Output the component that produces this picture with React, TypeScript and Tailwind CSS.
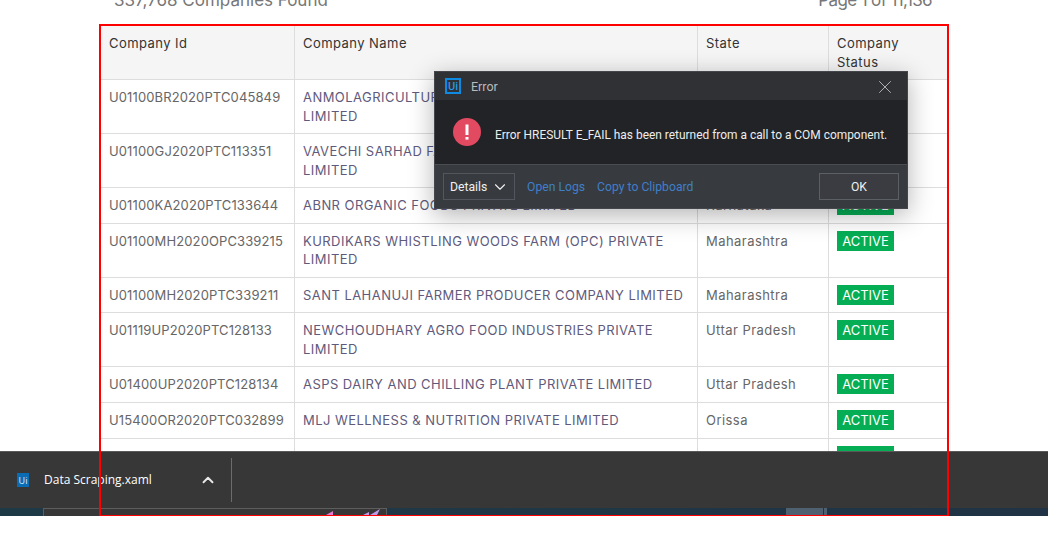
import { ChevronDown, ChevronUp, X } from 'lucide-react';

type Row = { id: string; name: string[]; state: string };

const rows: Row[] = [
  { id: 'U01100BR2020PTC045849', name: ['ANMOLAGRICULTURE PRODUCER COMPANY', 'LIMITED'], state: 'Bihar' },
  { id: 'U01100GJ2020PTC113351', name: ['VAVECHI SARHAD FARMER PRODUCER COMPANY', 'LIMITED'], state: 'Gujarat' },
  { id: 'U01100KA2020PTC133644', name: ['ABNR ORGANIC FOODS PRIVATE LIMITED'], state: 'Karnataka' },
  { id: 'U01100MH2020OPC339215', name: ['KURDIKARS WHISTLING WOODS FARM (OPC) PRIVATE', 'LIMITED'], state: 'Maharashtra' },
  { id: 'U01100MH2020PTC339211', name: ['SANT LAHANUJI FARMER PRODUCER COMPANY LIMITED'], state: 'Maharashtra' },
  { id: 'U01119UP2020PTC128133', name: ['NEWCHOUDHARY AGRO FOOD INDUSTRIES PRIVATE', 'LIMITED'], state: 'Uttar Pradesh' },
  { id: 'U01400UP2020PTC128134', name: ['ASPS DAIRY AND CHILLING PLANT PRIVATE LIMITED'], state: 'Uttar Pradesh' },
  { id: 'U15400OR2020PTC032899', name: ['MLJ WELLNESS & NUTRITION PRIVATE LIMITED'], state: 'Orissa' },
  { id: '', name: [''], state: '' },
];

const cell = 'border border-[#ddd] px-2 pt-2 pb-2 align-top';

function CompanyTable() {
  return (
    <table className="w-[847px] table-fixed border-collapse text-[13px] leading-[18.5px] tracking-[0.45px] text-[#666]">
      <colgroup>
        <col className="w-[194px]" />
        <col className="w-[403px]" />
        <col className="w-[131px]" />
        <col className="w-[119px]" />
      </colgroup>
      <thead>
        <tr className="bg-[#f5f5f5] text-left text-[#333]">
          <th className={`${cell} font-normal`}>Company Id</th>
          <th className={`${cell} font-normal`}>Company Name</th>
          <th className={`${cell} font-normal`}>State</th>
          <th className={`${cell} font-normal`}>
            Company
            <br />
            Status
          </th>
        </tr>
      </thead>
      <tbody>
        {rows.map((r, i) => (
          <tr key={i} className={i === 7 ? 'h-9' : ''}>
            <td className={`${cell} tracking-[0.12px]`}>{r.id}</td>
            <td className={`${cell} text-[#5f5a7c]`}>
              {r.name.map((line, j) => (
                <div key={j} className="whitespace-nowrap">
                  {line}
                </div>
              ))}
            </td>
            <td className={cell}>{r.state}</td>
            <td className={cell}>
              <div className="h-[18.5px]">
                <span className="-mt-px block h-5 w-[57px] bg-[#05ae55] text-center text-[13px] leading-5 tracking-normal text-white">
                  ACTIVE
                </span>
              </div>
            </td>
          </tr>
        ))}
      </tbody>
    </table>
  );
}

function ErrorDialog() {
  return (
    <div className="absolute left-[434px] top-[71px] flex h-[138px] w-[474px] flex-col border border-[#44464b] font-['Roboto',sans-serif] shadow-[0_6px_24px_rgba(0,0,0,0.3)]">
      <div className="flex h-[28px] items-center bg-[#2f3135] pl-[10px] pr-[11px]">
        <span className="flex h-4 w-4 items-center justify-center border-2 border-[#0e8be0] text-[11px] font-medium leading-none text-[#2a97e6]">
          Ui
        </span>
        <span className="ml-[10px] pt-[2px] text-[12.5px] text-[#b9bbbe]">Error</span>
        <X className="ml-auto mt-[2px] h-[22px] w-[22px] text-[#b9bbbe]" strokeWidth={1} />
      </div>
      <div className="flex h-[65px] items-center border-b border-[#4a4c51] bg-[#222326] pl-[18px]">
        <svg width="28" height="28" viewBox="0 0 28 28">
          <circle cx="14" cy="14" r="14" fill="#e24a62" />
          <rect x="12.5" y="6.5" width="3" height="10.5" fill="#fff" />
          <rect x="12.5" y="19" width="3" height="2.6" fill="#fff" />
        </svg>
        <span className="ml-[14px] mt-[7px] whitespace-nowrap text-[11.93px] text-[#eceded]">
          Error HRESULT E_FAIL has been returned from a call to a COM component.
        </span>
      </div>
      <div className="flex flex-1 items-center bg-[#373a3f] pl-2 pr-2 text-[12.2px]">
        <div className="flex h-[27px] w-[72px] items-center justify-between border border-[#53565c] pl-[6px] pr-[5px] text-[#f0f0f0]">
          <span className="pt-[2px]">Details</span>
          <ChevronDown className="h-[18px] w-[18px]" strokeWidth={1.5} />
        </div>
        <span className="ml-3 pt-[2px] text-[#3f7fc9]">Open Logs</span>
        <span className="ml-3 pt-[2px] text-[#3f7fc9]">Copy to Clipboard</span>
        <div className="ml-auto flex h-[27px] w-20 items-center justify-center border border-[#5c5f64] bg-[#3a3c41] pt-[2px] text-[#f0f0f0]">
          OK
        </div>
      </div>
    </div>
  );
}

function DownloadBar() {
  return (
    <div className="absolute inset-x-0 top-[451px] h-[65px]">
      <div className="flex h-[57px] items-center border-t border-[#5a5a5a] bg-[#373737] font-['Open_Sans',sans-serif]">
        <div className="relative ml-[17px] flex h-[14px] w-3 items-center justify-center bg-[#0a6cb5] text-[9px] leading-none text-[#d8ecfa]">
          Ui
        </div>
        <span className="ml-[15px] w-[140px] whitespace-nowrap text-xs text-white">Data Scraping.xaml</span>
        <ChevronUp className="ml-[15px] h-[18px] w-[18px] text-[#e8e8e8]" strokeWidth={2.5} />
        <div className="ml-[14px] h-[44px] w-px bg-[#6c6c6c]" />
      </div>
      <div className="relative h-2 bg-[linear-gradient(90deg,#1f3a47,#1f3344)]">
        <div className="absolute left-[43px] top-0 h-2 w-[344px] border border-b-0 border-[#5d5d5d] bg-[#373737]">
          <svg className="absolute inset-0" width="342" height="7" viewBox="0 0 342 7">
            <path d="M282 6L289 2V6Z" fill="#e57ad0" />
            <path d="M319 6L325 3V6ZM326 6L336 0L333 6Z" fill="#c29be8" />
          </svg>
        </div>
        <div className="absolute left-[786px] top-0 h-2 w-[37px] bg-[#4f6070]" />
        <div className="absolute left-[824px] top-0 h-2 w-[3px] bg-[#4f6070]" />
      </div>
    </div>
  );
}

export default function App() {
  return (
    <div className="h-[541px] w-[1048px] overflow-hidden bg-white font-['Inter',sans-serif]">
      <div className="relative h-[516px] overflow-hidden">
        <div className="-mt-[10px] flex h-[35px] items-start justify-between pl-[114px] pr-[116px] text-[17px] leading-[20px] text-[#777]">
          <span>337,768 Companies Found</span>
          <span className="tracking-[-0.62px]">Page 1 of 11,136</span>
        </div>
        <div className="ml-[100px]">
          <CompanyTable />
        </div>
        <DownloadBar />
        <div className="pointer-events-none absolute left-[99px] top-[24px] h-[492px] w-[850px] border-2 border-b-[1px] border-[#f00]" />
        <ErrorDialog />
      </div>
    </div>
  );
}
